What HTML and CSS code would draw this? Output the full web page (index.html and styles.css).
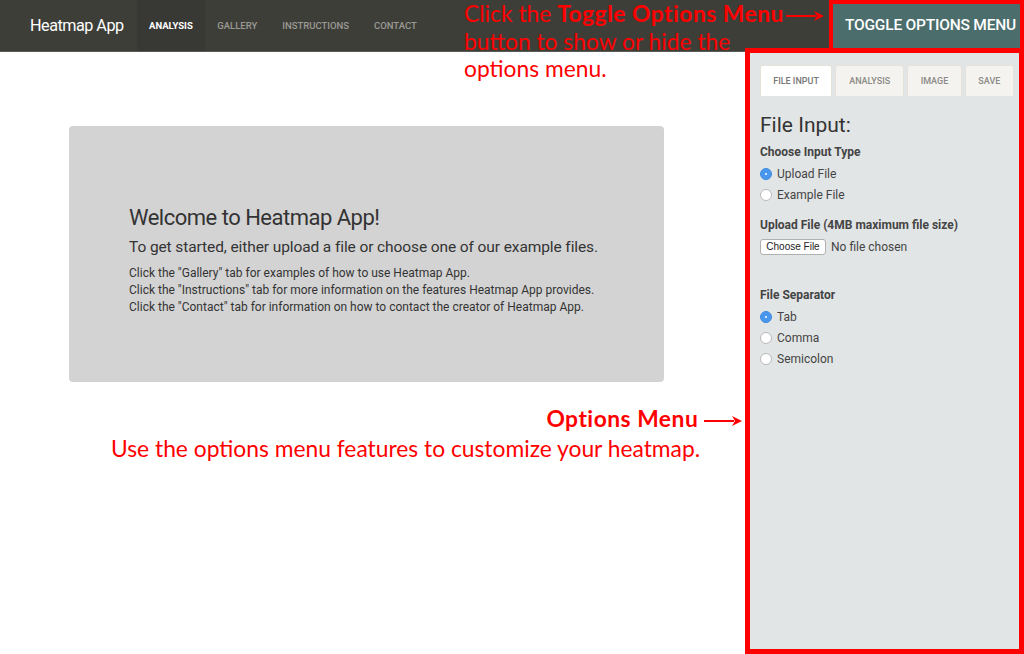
FILE: index.html
```html
<!DOCTYPE html>
<html lang="en">
<head>
<meta charset="utf-8">
<title>Heatmap App</title>
<link rel="stylesheet" href="styles.css">
</head>
<body>
<header class="navbar">
  <div class="brand">Heatmap App</div>
  <nav class="nav">
    <a class="nav-link active">ANALYSIS</a>
    <a class="nav-link">GALLERY</a>
    <a class="nav-link">INSTRUCTIONS</a>
    <a class="nav-link">CONTACT</a>
  </nav>
  <div class="spacer"></div>
  <button class="toggle">TOGGLE OPTIONS MENU</button>
</header>

<div class="page">
  <main class="main">
    <section class="well">
      <h1 class="well-title">Welcome to Heatmap App!</h1>
      <h2 class="well-sub">To get started, either upload a file or choose one of our example files.</h2>
      <p class="well-line">Click the "Gallery" tab for examples of how to use Heatmap App.</p>
      <p class="well-line">Click the "Instructions" tab for more information on the features Heatmap App provides.</p>
      <p class="well-line">Click the "Contact" tab for information on how to contact the creator of Heatmap App.</p>
    </section>
  </main>

  <aside class="options">
    <div class="tabs">
      <div class="tab active t1">FILE INPUT</div>
      <div class="tab t2">ANALYSIS</div>
      <div class="tab t3">IMAGE</div>
      <div class="tab t4">SAVE</div>
    </div>
    <h3 class="opt-title">File Input:</h3>
    <div class="field">
      <div class="label">Choose Input Type</div>
      <div class="radio"><span class="dot checked"></span>Upload File</div>
      <div class="radio"><span class="dot"></span>Example File</div>
    </div>
    <div class="field">
      <div class="label">Upload File (4MB maximum file size)</div>
      <div class="file-row"><span class="file-btn">Choose File</span><span class="file-none">No file chosen</span></div>
    </div>
    <div class="field sep">
      <div class="label">File Separator</div>
      <div class="radio"><span class="dot checked"></span>Tab</div>
      <div class="radio"><span class="dot"></span>Comma</div>
      <div class="radio"><span class="dot"></span>Semicolon</div>
    </div>
  </aside>
</div>

<div class="note note-top">
  <div class="first">Click the <b>Toggle Options Menu</b> <svg class="arrow arrow-top" width="38" height="10" viewBox="0 0 38 10"><line x1="0" y1="5" x2="30" y2="5" stroke="#ff0000" stroke-width="2"/><polygon points="28,0 38,5 28,10 31,5" fill="#ff0000"/></svg></div>
  <div class="second">button to show or hide the</div>
  <div class="third">options menu.</div>
</div>

<div class="note note-opt">
  <div class="note-head"><b>Options Menu</b> <svg class="arrow" width="38" height="10" viewBox="0 0 38 10"><line x1="0" y1="5" x2="30" y2="5" stroke="#ff0000" stroke-width="2"/><polygon points="28,0 38,5 28,10 31,5" fill="#ff0000"/></svg></div>
  <div>Use the options menu features to customize your heatmap.</div>
</div>
</body>
</html>
```

FILE: styles.css
```css
* { box-sizing: border-box; }
html, body { margin: 0; padding: 0; }
body {
  width: 1024px;
  height: 654px;
  overflow: hidden;
  background: #ffffff;
  font-family: Roboto, "Liberation Sans", sans-serif;
  color: #333;
  position: relative;
}

.navbar {
  height: 52px;
  background: #3e3e39;
  border-bottom: 1px solid #5a5a55;
  display: flex;
  align-items: stretch;
}
.brand {
  color: #fff;
  font-size: 16.2px;
  letter-spacing: -0.5px;
  padding-left: 30px;
  display: flex;
  align-items: center;
  width: 137px;
  white-space: nowrap;
}
.nav { display: flex; }
.nav-link {
  display: flex;
  align-items: center;
  padding: 0 12.5px 0 12.5px;
  font-size: 9.5px;
  font-weight: 500;
  color: #9a9a94;
}
.nav-link.active {
  color: #fff;
  font-weight: 700;
  background: #383834;
  padding: 0 12px;
}
.spacer { flex: 1; }
.toggle {
  width: 195px;
  height: 52px;
  margin: 0;
  background: #4b6e6d;
  color: #fff;
  border: 4px solid #ff0000;
  font-family: Roboto, "Liberation Sans", sans-serif;
  font-size: 15.5px;
  font-weight: 500;
  letter-spacing: -0.2px;
  padding: 0 0 2px 8px;
  white-space: nowrap;
}

.page {
  display: flex;
  align-items: flex-start;
}
.main {
  flex: 1;
  padding: 74px 81px 0 69px;
}
.well {
  background: #d3d3d3;
  border-radius: 4px;
  height: 256px;
  padding: 77px 40px 0 60px;
}
.well-title {
  margin: 0 0 3px;
  font-size: 22px;
  letter-spacing: -0.5px;
  font-weight: 400;
  color: #333;
  line-height: 30px;
  white-space: nowrap;
}
.well-sub {
  margin: 0 0 7px;
  font-size: 15.5px;
  letter-spacing: -0.1px;
  font-weight: 400;
  color: #333;
  line-height: 22px;
  white-space: nowrap;
}
.well-line {
  margin: 0;
  font-size: 12px;
  line-height: 17px;
  color: #333;
  white-space: nowrap;
}

.options {
  width: 279px;
  height: 606px;
  margin-top: -4px;
  background: #e2e5e6;
  border: 5px solid #ff0000;
  padding: 12px 5px 0 10px;
}
.tabs {
  display: flex;
  gap: 3px;
  border-bottom: 1px solid #e2e5e6;
}
.tab {
  height: 31px;
  display: flex;
  align-items: center;
  justify-content: center;
  font-size: 9px;
  font-weight: 500;
  color: #8a8a86;
  background: #f5f3ef;
  border: 1px solid #e6e2da;
  border-bottom: none;
  border-radius: 3px 3px 0 0;
}
.tab.active { background: #fff; color: #777; }
.t1 { width: 73px; }
.t2 { width: 70px; }
.t3 { width: 55px; }
.t4 { width: 50px; }

.opt-title {
  margin: 15px 0 0;
  font-size: 21px;
  font-weight: 400;
  color: #333;
  line-height: 26px;
}
.field { margin-top: 5px; }
.label {
  font-size: 12px;
  font-weight: 700;
  color: #444;
  line-height: 18px;
  margin-bottom: 2px;
}
.radio {
  display: flex;
  align-items: center;
  font-size: 12px;
  color: #444;
  height: 21px;
}
.dot {
  width: 12px;
  height: 12px;
  border-radius: 50%;
  background: #fff;
  border: 1px solid #b9b9b9;
  margin-right: 5px;
  position: relative;
}
.dot.checked {
  background: #4a97ef;
  border-color: #3d8ae0;
}
.dot.checked::after {
  content: "";
  position: absolute;
  left: 4px; top: 4px;
  width: 2px; height: 2px;
  border-radius: 50%;
  background: #fff;
}
.field + .field { margin-top: 11px; }
.file-row {
  display: flex;
  align-items: center;
  gap: 5px;
  margin-top: 5px;
}
.file-btn {
  display: inline-block;
  width: 66px;
  height: 16px;
  background: #fff;
  border: 1px solid #b0b0b0;
  border-radius: 3px;
  font-size: 10px;
  line-height: 14px;
  text-align: center;
  color: #222;
  font-family: "Liberation Sans", sans-serif;
}
.file-none { font-size: 12px; color: #444; }
.field.sep { margin-top: 31px; }

.note {
  position: absolute;
  color: #ff0000;
  font-family: Lato, "Open Sans", sans-serif;
  font-size: 22.8px;
  line-height: 29px;
  white-space: nowrap;
}
.note b { font-weight: 700; letter-spacing: 0.5px; }
.arrow { vertical-align: middle; }
.arrow-top { margin-left: -4px; }
.note-top { left: 464px; top: 0; }
.note-top .first { line-height: 27px; }
.note-top .second { margin-top: 0; }
.note-top .third { margin-top: -2px; }
.note-opt { left: 111px; top: 403px; }
.note-head { text-align: right; margin-right: -42px; line-height: 31px; }
```
